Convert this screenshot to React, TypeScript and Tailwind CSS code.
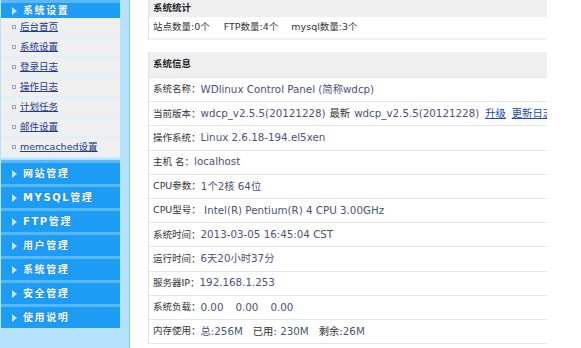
import React from 'react';

const subItems = ['后台首页', '系统设置', '登录日志', '操作日志', '计划任务', '邮件设置', 'memcached设置'];
const groups = ['网站管理', 'MYSQL管理', 'FTP管理', '用户管理', '系统管理', '安全管理', '使用说明'];

const Arrow = () => (
  <svg width="5" height="8" viewBox="0 0 5 8" className="shrink-0">
    <path d="M0 0 L5 4 L0 8 Z" fill="#c6e2fb" />
  </svg>
);

const GroupBar: React.FC<{ title: string; first?: boolean }> = ({ title, first }) => (
  <div
    className={`flex items-center gap-[6px] pl-[11px] text-white font-bold text-[10px] tracking-[1.6px] bg-[#1c9cf5] border-t-[3px] border-t-[#58b8f9] ${first ? 'h-[18px] border-t-[2px] border-t-[#43aef8]' : 'h-[24px] mt-0'}`}
    style={{ textShadow: '0 0 1px rgba(0,60,140,0.5)' }}
  >
    <Arrow />
    <span>{title}</span>
  </div>
);

const Row: React.FC<{ label: string; children?: React.ReactNode }> = ({ label, children }) => (
  <div className="h-[24.2px] flex items-center pl-[4px] border-b border-[#e6e6e6] whitespace-nowrap overflow-hidden">
    <span className="text-[#333]">{label}</span>
    <span className="text-[#4a5279] text-[10.3px]">{children}</span>
  </div>
);

export default function App() {
  return (
    <div
      className="flex w-[581px] h-[348px] overflow-hidden bg-white text-[9.5px]"
      style={{ fontFamily: '"DejaVu Sans", "Noto Sans CJK SC", sans-serif' }}
    >
      {/* sidebar */}
      <div className="w-[130px] shrink-0 bg-[#b5e1fc] border-r border-[#86c4f1] flex">
        <div className="w-[119px] ml-[1px]">
          <GroupBar title="系统设置" first />
          {subItems.map((s) => (
            <div
              key={s}
              className="h-[20px] flex items-center bg-[#efefef] border-b-[2px] border-[#dcf0fd] pl-[11px]"
            >
              <span className="w-[4px] h-[4px] border border-[#8aa7d6] mr-[4px] shrink-0" />
              <span className="text-[#1d3a8c] underline underline-offset-[1px]">{s}</span>
            </div>
          ))}
          <div className="h-[2px]" />
          {groups.map((g) => (
            <GroupBar key={g} title={g} />
          ))}
        </div>
      </div>

      {/* main */}
      <div className="flex-1 pl-[18px]">
        <div className="w-[399px]">
          <div className="border-l border-[#e3e3e3]">
            <div className="h-[17px] bg-[#efefef] flex items-center pl-[4px] font-bold text-[#222]">系统统计</div>
            <div className="h-[23px] flex items-center pl-[4px] text-[#333] border-b-[2px] border-[#efefef] whitespace-nowrap">
              <span>站点数量:0个</span>
              <span className="ml-[14px]">FTP数量:4个</span>
              <span className="ml-[13px]">mysql数量:3个</span>
            </div>
          </div>

          <div className="h-[12px]" />

          <div className="border-l border-[#e3e3e3]">
            <div className="h-[26px] bg-[#efefef] flex items-center pl-[4px] font-bold text-[#222] border-b border-[#e6e6e6]">系统信息</div>
            <Row label="系统名称：">WDlinux Control Panel (简称wdcp)</Row>
            <Row label="当前版本：">
              wdcp_v2.5.5(20121228)<span className="text-[#333] mx-[4px]">最新</span>wdcp_v2.5.5(20121228)
              <span className="text-[#1a47b0] underline ml-[6px]">升级</span>
              <span className="text-[#1a47b0] underline ml-[6px]">更新日志</span>
            </Row>
            <Row label="操作系统：">Linux 2.6.18-194.el5xen</Row>
            <Row label="主机 名：">localhost</Row>
            <Row label="CPU参数：">1个2核 64位</Row>
            <Row label="CPU型号：">&nbsp;Intel(R) Pentium(R) 4 CPU 3.00GHz</Row>
            <Row label="系统时间：">2013-03-05 16:45:04 CST</Row>
            <Row label="运行时间：">6天20小时37分</Row>
            <Row label="服务器IP：">192.168.1.253</Row>
            <Row label="系统负载：">
              0.00<span className="ml-[12px]">0.00</span>
              <span className="ml-[12px]">0.00</span>
            </Row>
            <Row label="内存使用：">
              总:256M<span className="ml-[10px] text-[#333]">已用:</span> 230M
              <span className="ml-[10px] text-[#333]">剩余:</span>26M
            </Row>
          </div>
        </div>
      </div>
    </div>
  );
}
